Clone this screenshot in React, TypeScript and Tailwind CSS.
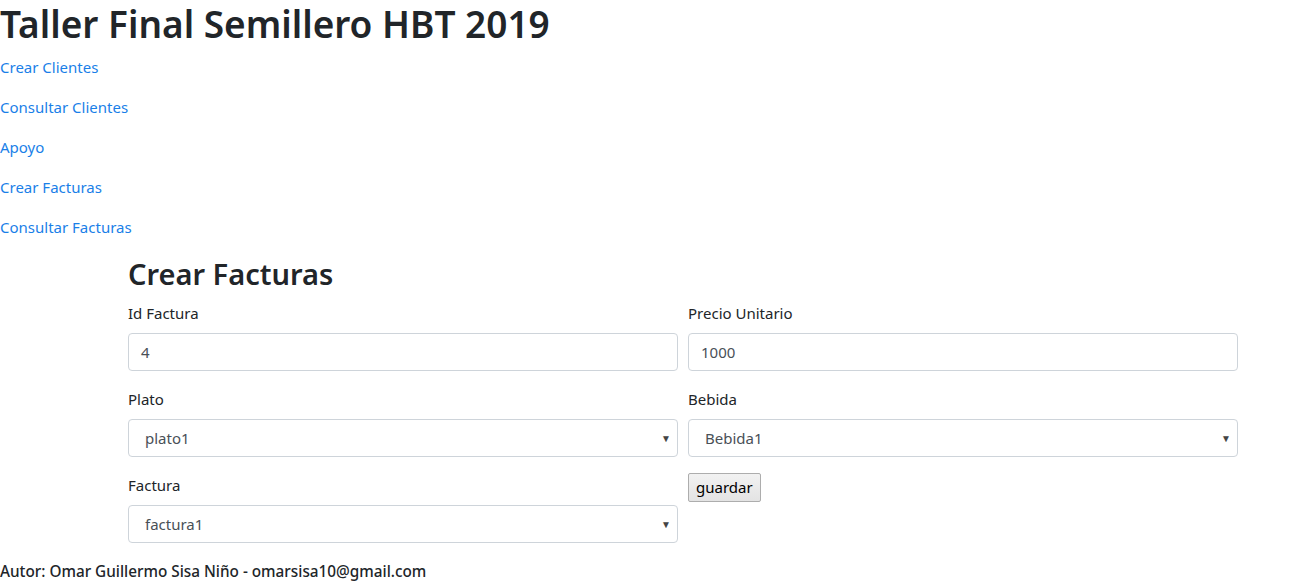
import React from "react";

const font = { fontFamily: '"Noto Sans", "Open Sans", sans-serif' };

function Field({ label, value }: { label: string; value: string }) {
  return (
    <div className="mb-4">
      <label className="mb-2 block text-[15px] leading-6 text-[#212529]">{label}</label>
      <div className="flex h-[38px] items-center rounded-[4px] border border-[#ced4da] bg-white px-3 text-[15px] text-[#495057]">
        {value}
      </div>
    </div>
  );
}

function SelectField({ label, value }: { label: string; value: string }) {
  return (
    <div className="mb-4">
      <label className="mb-2 block text-[15px] leading-6 text-[#212529]">{label}</label>
      <div className="flex h-[38px] items-center justify-between rounded-[4px] border border-[#ced4da] bg-white pl-4 pr-[6px] text-[15px] text-[#495057]">
        <span>{value}</span>
        <span className="text-[10px] text-[#444]">▼</span>
      </div>
    </div>
  );
}

export default function App() {
  return (
    <div className="bg-white text-[#212529]" style={font}>
      <h1 className="mb-2 text-[37px] font-semibold leading-[47px] text-[#212529]">Taller Final Semillero HBT 2019</h1>
      {["Crear Clientes", "Consultar Clientes", "Apoyo", "Crear Facturas", "Consultar Facturas"].map((l) => (
        <p key={l} className="mb-4 text-[15px] leading-6">
          <a href="#" className="text-[#1a7fe8]">{l}</a>
        </p>
      ))}
      <div className="ml-[128px] w-[1110px]">
        <h2 className="mb-2 text-[29px] font-semibold leading-[38px]">Crear Facturas</h2>
        <div className="-mx-[5px] flex">
          <div className="w-1/2 px-[5px]">
            <Field label="Id Factura" value="4" />
            <SelectField label="Plato" value="plato1" />
            <SelectField label="Factura" value="factura1" />
          </div>
          <div className="w-1/2 px-[5px]">
            <Field label="Precio Unitario" value="1000" />
            <SelectField label="Bebida" value="Bebida1" />
            <button className="h-[29px] rounded-[2px] border border-[#adadad] bg-gradient-to-b from-[#f2f2f2] to-[#e3e3e3] px-[7px] text-[15px] leading-none text-black">
              guardar
            </button>
          </div>
        </div>
      </div>
      <div className="text-[15.3px] font-medium leading-6">Autor: Omar Guillermo Sisa Niño - omarsisa10@gmail.com</div>
    </div>
  );
}
